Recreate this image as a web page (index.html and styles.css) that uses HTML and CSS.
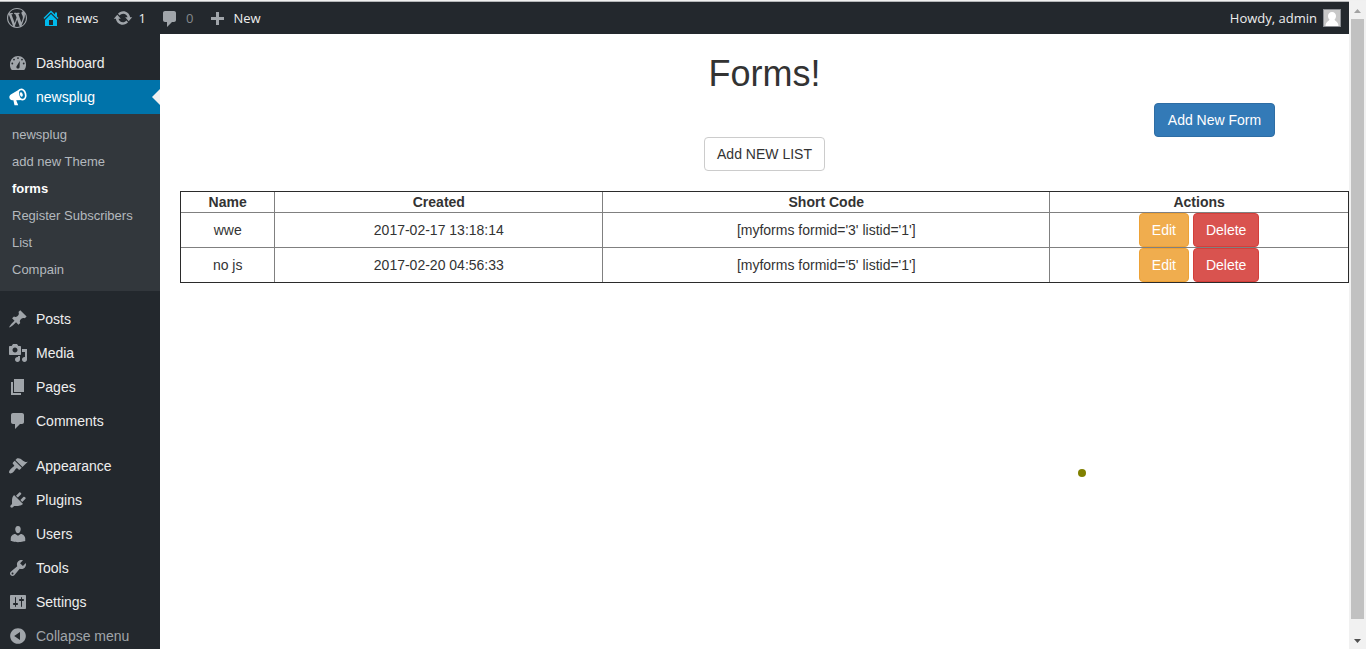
FILE: index.html
```
<!DOCTYPE html>
<html lang="en">
<head>
<meta charset="utf-8">
<title>Forms</title>
<link rel="stylesheet" href="styles.css">
</head>
<body>
<div class="window">
  <div class="page">
    <header class="adminbar">
      <nav class="adminbar-group" aria-label="Toolbar">
        <a class="bar-item" href="#" aria-label="About WordPress"><svg class="icon" viewBox="0 0 20 20"><path d="M20 10c0-5.51-4.49-10-10-10C4.48 0 0 4.49 0 10c0 5.52 4.48 10 10 10 5.51 0 10-4.48 10-10zM7.78 15.37L4.37 6.22c.55-.02 1.17-.08 1.17-.08.5-.06.44-1.13-.06-1.11 0 0-1.45.11-2.37.11-.18 0-.37 0-.58-.01C4.12 2.69 6.87 1.11 10 1.11c2.33 0 4.45.87 6.05 2.34-.68-.11-1.65.39-1.65 1.58 0 .74.45 1.36.9 2.1.35.61.55 1.36.55 2.46 0 1.49-1.4 5-1.4 5l-3.03-8.37c.54-.02.82-.17.82-.17.5-.05.44-1.25-.06-1.22 0 0-1.44.12-2.38.12-.87 0-2.33-.12-2.33-.12-.5-.03-.56 1.2-.06 1.22l.92.08 1.26 3.41zM17.41 10c.24-.64.74-1.87.43-4.25.7 1.29 1.05 2.71 1.05 4.25 0 3.29-1.73 6.24-4.4 7.78.97-2.59 1.94-5.2 2.92-7.78zM6.1 18.09C3.12 16.65 1.11 13.53 1.11 10c0-1.3.23-2.48.72-3.59C3.25 10.3 4.67 14.2 6.1 18.09zm4.03-6.63l2.58 6.98c-.86.29-1.76.45-2.71.45-.79 0-1.57-.11-2.29-.33.81-2.38 1.62-4.74 2.42-7.1z"/></svg></a>
        <a class="bar-item bar-site" href="#"><svg class="icon" viewBox="0 0 20 20"><path d="M16 8.5l1.53 1.53-1.06 1.06L10 4.6l-6.47 6.49-1.06-1.06L10 2.5l4 4v-2h2v4zm-6-2.46l6 5.99V18H4v-5.97zM12 17v-5H8v5h4z"/></svg>news</a>
        <a class="bar-item" href="#"><svg class="icon" viewBox="0 0 20 20"><path d="M10.2 3.28c3.53 0 6.43 2.61 6.92 6h2.08l-3.5 4-3.5-4h2.32c-.45-1.97-2.21-3.45-4.32-3.45-1.45 0-2.73.71-3.54 1.78L4.95 5.66C6.23 4.2 8.11 3.28 10.2 3.28zm-.4 13.44c-3.52 0-6.43-2.61-6.92-6H.8l3.5-4c1.17 1.33 2.33 2.67 3.5 4H5.48c.45 1.97 2.21 3.45 4.32 3.45 1.45 0 2.73-.71 3.54-1.78l1.71 1.95c-1.28 1.46-3.15 2.38-5.25 2.38z"/></svg>1</a>
        <a class="bar-item bar-muted" href="#"><svg class="icon" viewBox="0 0 20 20"><path d="M5 3h9c1.1 0 2 .9 2 2v7c0 1.1-.9 2-2 2h-2l-5 5v-5H5c-1.1 0-2-.9-2-2V5c0-1.1.9-2 2-2z"/></svg>0</a>
        <a class="bar-item" href="#"><svg class="icon" viewBox="0 0 20 20"><path d="M17 9v3h-5v5H9v-5H4V9h5V4h3v5z"/></svg>New</a>
      </nav>
      <a class="bar-item bar-account" href="#">Howdy, admin<svg class="avatar" viewBox="0 0 18 18"><path fill="#8c8f94" d="M0 0h18v18H0z"/><path fill="#c8c8c8" d="M1 1h16v16H1z"/><path fill="#fff" d="M9 3c2.500 0 4 1.800 4 4 0 1.600-.6 2.800-1.500 3.600 .2 1.500 3.500 1.600 4 6.400H2.500c.5-4.800 3.800-4.900 4-6.400C5.600 9.800 5 8.600 5 7c0-2.200 1.500-4 4-4z"/></svg></a>
    </header>
    <div class="body">
      <nav class="menu" aria-label="Main menu">
        <a class="menu-item" href="#"><svg class="icon" viewBox="0 0 20 20"><path fill-rule="evenodd" d="M3.760 17h12.480c1.340-1.630 2.010-3.820 1.760-6.370C17.570 6.340 14.200 3 10 3S2.430 6.340 2.030 10.630C1.780 13.180 2.420 15.370 3.760 17zM10 4.200a.9.9 0 1 1 0 1.800.9.9 0 0 1 0-1.800zM6 5.700a.9.9 0 1 1 0 1.800.9.9 0 0 1 0-1.800zM14 5.700a.9.9 0 1 1 0 1.800.9.9 0 0 1 0-1.800zM4.300 9.600a.9.9 0 1 1 0 1.800.9.9 0 0 1 0-1.800zM15.700 9.600a.9.9 0 1 1 0 1.800.9.9 0 0 1 0-1.800zM11.800 8l-.2 6c0 1-.7 1.600-1.600 1.600s-1.600-.7-1.600-1.600c0-.5.2-.9.500-1.200z"/></svg>Dashboard</a>
        <a class="menu-item menu-current" href="#"><svg class="icon" viewBox="0 0 20 20"><path d="M12 2L3.200 7.200C1.600 8 1 9.600 1.500 11.100c.4 1.500 1.600 2.300 3 2.100h.9l1.100 5.100h3.700L8.200 13.200l6.800-.2z"/><ellipse cx="14" cy="7.500" rx="4.400" ry="6" transform="rotate(-15 14 7.500)"/><ellipse class="horn-gap" cx="14" cy="7.500" rx="2.700" ry="4.300" transform="rotate(-15 14 7.500)"/><ellipse cx="13.300" cy="7.500" rx="1.400" ry="2.300" transform="rotate(-15 13.300 7.500)"/></svg>newsplug</a>
        <div class="submenu">
          <a class="submenu-item" href="#">newsplug</a>
          <a class="submenu-item" href="#">add new Theme</a>
          <a class="submenu-item submenu-current" href="#">forms</a>
          <a class="submenu-item" href="#">Register Subscribers</a>
          <a class="submenu-item" href="#">List</a>
          <a class="submenu-item" href="#">Compain</a>
        </div>
        <div class="menu-group">
          <a class="menu-item" href="#"><svg class="icon" viewBox="0 0 20 20"><path d="M10.440 3.020l1.820-1.820 6.360 6.350-1.830 1.820c-1.050-.68-2.480-.57-3.410.36l-.75.750c-.92.930-1.040 2.350-.35 3.410l-1.830 1.820-2.410-2.410-2.800 2.790c-.42.420-3.380 2.710-3.800 2.290s1.860-3.390 2.280-3.810l2.790-2.790L4.100 9.360l1.830-1.820c1.050.69 2.480.57 3.400-.36l.75-.75c.93-.92 1.050-2.350.36-3.410z"/></svg>Posts</a>
          <a class="menu-item" href="#"><svg class="icon" viewBox="0 0 20 20"><path d="M13 11V4c0-.55-.45-1-1-1h-1.670L9 1H5L3.670 3H2c-.55 0-1 .45-1 1v7c0 .55.450 1 1 1h10c.55 0 1-.45 1-1zM7 4.500c1.380 0 2.500 1.120 2.500 2.500S8.380 9.500 7 9.500 4.500 8.380 4.500 7 5.620 4.500 7 4.500zM14 6h5v10.500c0 1.380-1.120 2.500-2.500 2.500S14 17.880 14 16.500s1.120-2.500 2.500-2.500c.17 0 .340.020.500.050V9h-3V6zm-4 8.050V13h2v3.500c0 1.380-1.120 2.500-2.500 2.500S7 17.880 7 16.500 8.120 14 9.500 14c.17 0 .340.020.500.050z"/></svg>Media</a>
          <a class="menu-item" href="#"><svg class="icon" viewBox="0 0 20 20"><path d="M6 15V2h10v13H6zm-1 1h8v2H3V5h2v11z"/></svg>Pages</a>
          <a class="menu-item" href="#"><svg class="icon" viewBox="0 0 20 20"><path d="M5 2h9c1.100 0 2 .9 2 2v7c0 1.100-.9 2-2 2h-2l-5 5v-5H5c-1.100 0-2-.9-2-2V4c0-1.100.9-2 2-2z"/></svg>Comments</a>
        </div>
        <div class="menu-group">
          <a class="menu-item" href="#"><svg class="icon" viewBox="0 0 20 20"><path d="M14.480 11.060L7.410 3.990l1.500-1.500c.5-.56 2.300-.47 3.510.32 1.210.8 1.430 1.280 2.910 2.100 1.180.64 2.450 1.260 4.450.85zm-.71.710L6.700 4.700 4.930 6.470c-.39.390-.39 1.020 0 1.410l1.060 1.060c.39.390.390 1.030 0 1.420-.6.600-1.430 1.110-2.210 1.690-.35.260-.7.530-1.010.84C1.430 14.230.400 16.080 1.400 17.070c.99 1 2.840-.03 4.180-1.360.31-.31.580-.66.850-1.020.57-.78 1.080-1.610 1.690-2.210.39-.39 1.020-.39 1.410 0l1.060 1.060c.39.390 1.020.390 1.410 0z"/></svg>Appearance</a>
          <a class="menu-item" href="#"><svg class="icon" viewBox="0 0 20 20"><path d="M13.110 4.360L9.870 7.600 8 5.730l3.240-3.240c.35-.34 1.050-.2 1.560.32.520.51.660 1.210.31 1.550zm-8 1.770l.91-1.120 9.010 9.010-1.190.84c-.71.710-2.630 1.160-3.820 1.160H6.140L4.900 17.260c-.59.590-1.540.590-2.120 0-.59-.58-.59-1.530 0-2.120l1.240-1.240v-3.880c0-1.130.4-3.190 1.090-3.890zm7.260 3.970l3.240-3.240c.34-.35 1.040-.21 1.550.31.520.51.660 1.210.31 1.550l-3.240 3.250z"/></svg>Plugins</a>
          <a class="menu-item" href="#"><svg class="icon" viewBox="0 0 20 20"><path d="M10 9.250c-2.270 0-2.730-3.440-2.730-3.440C7 4.020 7.820 2 9.970 2c2.160 0 2.980 2.020 2.710 3.810 0 0-.41 3.440-2.680 3.440zm0 2.570L12.720 10c2.390 0 4.520 2.330 4.520 4.530v2.490s-3.650 1.130-7.240 1.130c-3.650 0-7.240-1.130-7.240-1.130v-2.490c0-2.250 1.940-4.480 4.470-4.480z"/></svg>Users</a>
          <a class="menu-item" href="#"><svg class="icon" viewBox="0 0 20 20"><path d="M16.680 9.770c-1.340 1.340-3.300 1.670-4.950.99l-5.410 6.520c-.99.990-2.590.990-3.580 0s-.99-2.590 0-3.570l6.520-5.420c-.68-1.650-.35-3.610.99-4.950 1.280-1.280 3.120-1.620 4.720-1.060l-2.890 2.890 2.820 2.820 2.860-2.870c.53 1.580.18 3.390-1.080 4.650zM3.810 16.210c.4.390 1.040.390 1.430 0 .4-.4.400-1.040 0-1.430-.39-.4-1.030-.4-1.430 0-.39.390-.39 1.030 0 1.430z"/></svg>Tools</a>
          <a class="menu-item" href="#"><svg class="icon" viewBox="0 0 20 20"><path d="M18 16V4c0-.55-.45-1-1-1H3c-.55 0-1 .45-1 1v12c0 .55.450 1 1 1h14c.55 0 1-.45 1-1zM8 11h1c.55 0 1 .45 1 1s-.45 1-1 1H8v1.500c0 .28-.22.500-.5.500s-.5-.22-.5-.5V13H6c-.55 0-1-.45-1-1s.45-1 1-1h1V5.500c0-.28.220-.5.500-.5s.5.220.5.500V11zm5-2h-1c-.55 0-1-.45-1-1s.45-1 1-1h1V5.500c0-.28.220-.5.500-.5s.5.220.5.500V7h1c.55 0 1 .45 1 1s-.45 1-1 1h-1v5.500c0 .28-.22.500-.5.500s-.5-.22-.5-.5V9z"/></svg>Settings</a>
          <button class="menu-item menu-collapse" type="button"><svg class="icon" viewBox="0 0 20 20"><path fill-rule="evenodd" d="M10 2.160c4.330 0 7.840 3.510 7.840 7.840s-3.510 7.840-7.840 7.840S2.160 14.330 2.160 10 5.710 2.160 10 2.160zm2 11.720V6.120L6.180 9.970z"/></svg>Collapse menu</button>
        </div>
      </nav>
      <main class="content">
        <h1 class="title">Forms!</h1>
        <div class="actions-right"><button class="btn btn-wide btn-primary" type="button">Add New Form</button></div>
        <div class="actions-center"><button class="btn btn-wide btn-default" type="button">Add NEW LIST</button></div>
        <table class="forms">
          <colgroup><col class="col-name"><col class="col-created"><col class="col-code"><col></colgroup>
          <thead>
            <tr><th>Name</th><th>Created</th><th>Short Code</th><th>Actions</th></tr>
          </thead>
          <tbody>
            <tr><td>wwe</td><td>2017-02-17 13:18:14</td><td>[myforms formid='3' listid='1']</td><td><div class="row-actions"><button class="btn btn-warning" type="button">Edit</button><button class="btn btn-danger" type="button">Delete</button></div></td></tr>
            <tr><td>no js</td><td>2017-02-20 04:56:33</td><td>[myforms formid='5' listid='1']</td><td><div class="row-actions"><button class="btn btn-warning" type="button">Edit</button><button class="btn btn-danger" type="button">Delete</button></div></td></tr>
          </tbody>
        </table>
        <span class="pointer-dot"></span>
      </main>
    </div>
  </div>
  <div class="scrollbar" aria-hidden="true">
    <svg class="scroll-arrow" viewBox="0 0 17 17"><path fill="#a3a3a3" d="M5 11h7L8.500 7z"/></svg>
    <div class="scroll-thumb"></div>
    <svg class="scroll-arrow" viewBox="0 0 17 17"><path fill="#505050" d="M5 7h7l-3.500 4z"/></svg>
  </div>
</div>
</body>
</html>
```
FILE: styles.css
```
* { box-sizing: border-box; }

body {
  margin: 0;
  font: 14px/20px "Liberation Sans", Arial, sans-serif;
  color: #333;
  background: #fff;
}

a { color: inherit; text-decoration: none; }
button { font: inherit; cursor: pointer; }

.window {
  display: flex;
  height: 100vh;
  overflow: hidden;
  border-top: 1px solid #f0f0f0;
}

.page {
  flex: 1;
  min-width: 0;
  display: flex;
  flex-direction: column;
  border-top: 1px solid #b4b6b8;
}

.icon {
  flex: none;
  width: 20px;
  height: 20px;
  fill: #a0a5aa;
}

/* Toolbar */
.adminbar {
  flex: none;
  display: flex;
  justify-content: space-between;
  height: 32px;
  color: #eee;
  background: #23282d;
  font: 13px/32px "Open Sans", sans-serif;
}

.adminbar-group { display: flex; }

.bar-item {
  display: flex;
  align-items: center;
  gap: 6px;
  padding: 0 7px;
}

.bar-site .icon { fill: #00b9eb; }
.bar-muted { color: #84888c; }
.bar-account { padding-right: 8px; }
.avatar { width: 18px; height: 18px; }

/* Side menu */
.body {
  flex: 1;
  min-height: 0;
  display: flex;
}

.menu {
  flex: none;
  width: 160px;
  padding-top: 12px;
  overflow: hidden;
  background: #23282d;
}

.menu-group { margin-top: 11px; }

.menu-item {
  display: flex;
  align-items: center;
  gap: 8px;
  width: 100%;
  height: 34px;
  padding: 0 8px;
  color: #eee;
}

.menu-current {
  position: relative;
  color: #fff;
  background: #0073aa;
}

.menu-current .icon { fill: #fff; }
.horn-gap { fill: #0073aa; }

.menu-current::after {
  content: "";
  position: absolute;
  right: 0;
  top: 9px;
  border: 8px solid transparent;
  border-left: 0;
  border-right-color: #f1f1f1;
}

.menu-collapse {
  color: #a0a5aa;
  background: none;
  border: 0;
}

.submenu {
  padding: 7px 0 8px;
  background: #32373c;
}

.submenu-item {
  display: block;
  padding: 0 12px;
  color: #b4b9be;
  font-size: 13px;
  line-height: 27px;
}

.submenu-current { color: #fff; font-weight: bold; }

/* Content */
.content {
  position: relative;
  flex: 1;
  min-width: 0;
  padding: 20px 0 0 20px;
}

.title {
  margin: 0 0 10px;
  font-size: 36px;
  font-weight: normal;
  line-height: 39px;
  text-align: center;
}

.actions-right {
  display: flex;
  justify-content: flex-end;
  padding-right: 74px;
}

.actions-center {
  display: flex;
  justify-content: center;
  margin-bottom: 20px;
}

.btn {
  height: 34px;
  padding: 0 12px;
  border: 1px solid;
  border-radius: 4px;
  color: #fff;
}

.btn-wide { min-width: 121px; }
.btn-primary { background: #337ab7; border-color: #2e6da4; }
.btn-default { color: #333; background: #fff; border-color: #ccc; }
.btn-warning { background: #f0ad4e; border-color: #eea236; }
.btn-danger { background: #d9534f; border-color: #d43f3a; }

.forms {
  width: 100%;
  table-layout: fixed;
  border: 1px solid #2b2b2b;
  border-spacing: 0;
  text-align: center;
}

.col-name { width: 8%; }
.col-created { width: 28.1%; }
.col-code { width: 38.3%; }

.forms th, .forms td { padding: 0; }
.forms th + th, .forms td + td { border-left: 1px solid #808080; }
.forms td { border-top: 1px solid #808080; }

.row-actions {
  display: flex;
  justify-content: center;
  gap: 4px;
}

.pointer-dot {
  position: absolute;
  left: 918px;
  top: 435px;
  width: 8px;
  height: 8px;
  border-radius: 50%;
  background: #808000;
}

/* Scroll bar */
.scrollbar {
  flex: none;
  display: flex;
  flex-direction: column;
  width: 17px;
  padding: 1px 0 0;
  background: #f1f1f1;
}

.scroll-arrow { flex: none; width: 17px; height: 17px; }

.scroll-thumb {
  flex: none;
  height: calc(100% - 47px);
  margin: 0 2px auto;
  background: #c1c1c1;
}
```
